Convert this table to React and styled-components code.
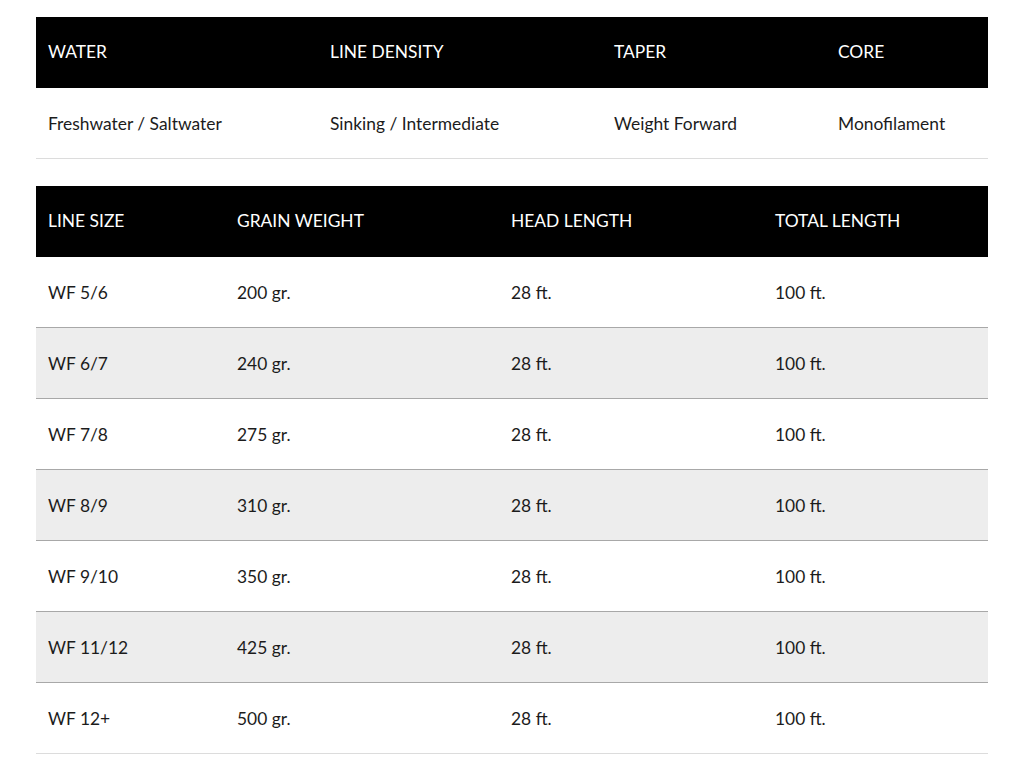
import React from "react";
import styled, { createGlobalStyle } from "styled-components";

const GlobalStyle = createGlobalStyle`
  body {
    margin: 0;
    background: #fff;
    font-family: Lato, "Noto Sans", sans-serif;
    color: #1c1c1c;
  }
`;

const Page = styled.div`
  padding: 17px 36px 0 36px;
`;

const Table = styled.table`
  width: 952px;
  border-collapse: collapse;
  table-layout: fixed;
  margin-bottom: 27px;
  font-size: 17.4px;
`;

const HeadCell = styled.th`
  background: #000;
  color: #fff;
  font-weight: 400;
  text-align: left;
  height: 71px;
  padding: 0 12px 2px;
  width: ${(p) => p.w}px;
  box-sizing: border-box;
`;

const Row = styled.tr`
  background: ${(p) => (p.striped ? "#ededed" : "#fff")};
  border-bottom: 1px solid #a8a8a8;
  &:last-child {
    border-bottom: 1px solid #dcdcdc;
  }
`;

const Cell = styled.td`
  height: 69px;
  padding: 1px 12px 0;
`;

const specCols = [
  { label: "WATER", w: 282 },
  { label: "LINE DENSITY", w: 284 },
  { label: "TAPER", w: 224 },
  { label: "CORE", w: 162 },
];

const specRow = ["Freshwater / Saltwater", "Sinking / Intermediate", "Weight Forward", "Monofilament"];

const sizeCols = [
  { label: "LINE SIZE", w: 189 },
  { label: "GRAIN WEIGHT", w: 274 },
  { label: "HEAD LENGTH", w: 264 },
  { label: "TOTAL LENGTH", w: 225 },
];

const sizes = [
  ["WF 5/6", "200 gr."],
  ["WF 6/7", "240 gr."],
  ["WF 7/8", "275 gr."],
  ["WF 8/9", "310 gr."],
  ["WF 9/10", "350 gr."],
  ["WF 11/12", "425 gr."],
  ["WF 12+", "500 gr."],
];

const SpecTable = ({ cols, rows }) => (
  <Table>
    <thead>
      <tr>
        {cols.map((c) => (
          <HeadCell key={c.label} w={c.w}>
            {c.label}
          </HeadCell>
        ))}
      </tr>
    </thead>
    <tbody>
      {rows.map((r, i) => (
        <Row key={i} striped={i % 2 === 1}>
          {r.map((v, j) => (
            <Cell key={j}>{v}</Cell>
          ))}
        </Row>
      ))}
    </tbody>
  </Table>
);

const App = () => (
  <Page>
    <GlobalStyle />
    <SpecTable cols={specCols} rows={[specRow]} />
    <SpecTable cols={sizeCols} rows={sizes.map(([s, g]) => [s, g, "28 ft.", "100 ft."])} />
  </Page>
);

export default App;
